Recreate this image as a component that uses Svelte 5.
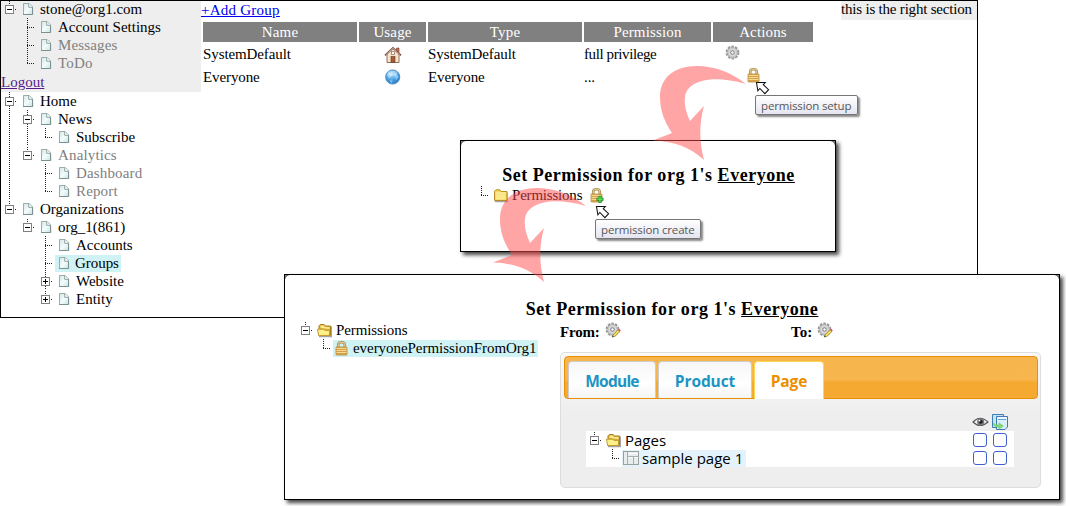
<script>
  // Tree rows: g lists the guide cells before the icon.
  // '' blank, 'v' through line, 't' branch, 'l' last branch,
  // '-' open node, '-l' open last node, '+' / '+l' closed node
  const account = [
    { g: ['-l'], text: 'stone@org1.com' },
    { g: ['', 't'], text: 'Account Settings' },
    { g: ['', 't'], text: 'Messages', dim: true },
    { g: ['', 'l'], text: 'ToDo', dim: true }
  ];
  const site = [
    { g: ['-'], text: 'Home' },
    { g: ['v', '-'], text: 'News' },
    { g: ['v', 'v', 'l'], text: 'Subscribe' },
    { g: ['v', '-l'], text: 'Analytics', dim: true },
    { g: ['v', '', 't'], text: 'Dashboard', dim: true },
    { g: ['v', '', 'l'], text: 'Report', dim: true },
    { g: ['-l'], text: 'Organizations' },
    { g: ['', '-l'], text: 'org_1(861)' },
    { g: ['', '', 't'], text: 'Accounts' },
    { g: ['', '', 't'], text: 'Groups', active: true },
    { g: ['', '', '+'], text: 'Website' },
    { g: ['', '', '+l'], text: 'Entity' }
  ];
  const permissionTree = [
    { g: ['-l'], text: 'Permissions', icon: 'open' },
    { g: ['', 'l'], text: 'everyonePermissionFromOrg1', icon: 'lock', active: true }
  ];
  const pageTree = [
    { g: ['-l'], text: 'Pages', icon: 'open' },
    { g: ['', 'l'], text: 'sample page 1', icon: 'layout', active: true }
  ];
  const columns = ['Name', 'Usage', 'Type', 'Permission', 'Actions'];
</script>

{#snippet guide(kind)}
  <svg class="cell" width="18" height="18" viewBox="0 0 18 18" shape-rendering="crispEdges">
    {#if kind !== ''}
      <path d={kind === 'l' ? 'M9.5 0V10' : kind === '-l' || kind === '+l' ? 'M9.5 1V5' : 'M9.5 0V18'} stroke="#222" stroke-dasharray="1 1" />
      {#if kind === 't' || kind === 'l'}
        <path d="M9 9.5H16" stroke="#222" stroke-dasharray="1 1" />
      {/if}
      {#if kind[0] === '-' || kind[0] === '+'}
        <rect x="5.5" y="5.5" width="8" height="8" fill="#fff" stroke="#808080" />
        <path d="M7 9.5H12" stroke="#000" />
        {#if kind[0] === '+'}<path d="M9.5 7V12" stroke="#000" />{/if}
        <path d="M15 9.5H16" stroke="#222" />
      {/if}
    {/if}
  </svg>
{/snippet}

{#snippet lock()}
  <path d="M6.2 8V4.8Q6.2 2.2 9.5 2.2T12.8 4.8V8" fill="none" stroke="#a58a50" stroke-width="2.6" />
  <path d="M6.2 8V4.8Q6.2 2.2 9.5 2.2T12.8 4.8V8" fill="none" stroke="#e6cf98" stroke-width="1.1" />
  <rect x="4" y="7" width="11" height="8" rx="0.8" fill="#e0ab50" stroke="#b58838" stroke-width="0.8" />
  <path d="M4.5 8.5H14.5M4.5 10.5H14.5M4.5 12.5H14.5" stroke="#f7d994" />
  <path d="M4.5 9.5H14.5M4.5 11.5H14.5M4.5 13.5H14.5" stroke="#cf9b48" stroke-width="0.7" />
{/snippet}

{#snippet icon(kind)}
  <svg class="cell" width="18" height="18" viewBox="0 0 18 18">
    {#if kind === 'lock'}
      <g transform="translate(0 1)">{@render lock()}</g>
    {:else if kind === 'open'}
      <path d="M5 15.7H17.4V5.5" fill="none" stroke="#666" stroke-opacity="0.6" stroke-width="1.3" />
      <path d="M5 14V4.8L6.3 3.5H10.2L11.5 5H16.5V14.5H5Z" fill="#d9b23a" stroke="#a97e1c" />
      <path d="M6.5 7V5L7.2 4.5H10L11 6H15.5V8" fill="#fbe98a" />
      <path d="M3.4 8.2H9.8L10.9 9.4H15.7L15.3 14.5H4.7Z" fill="#fdf08a" stroke="#c39a2b" />
    {:else if kind === 'folder'}
      <path d="M5 15.7H18V6.5" fill="none" stroke="#666" stroke-opacity="0.6" stroke-width="1.3" />
      <path d="M4.5 14.5V5.2L5.9 3.8H9.8L11.2 5.5H17V14.5Z" fill="#f4d65c" stroke="#b98e25" />
      <path d="M5.5 7H16" stroke="#fff9c4" /><path d="M6 8.3H15.5V13.5H6Z" fill="#fce98a" />
    {:else if kind === 'layout'}
      <rect x="2.5" y="2.5" width="15" height="13" fill="#e9ecec" stroke="#989f9f" />
      <path d="M6.5 3V15.5M7 7.5H17.5M12.5 8V15.5" stroke="#a6adad" />
      <path d="M7.5 4.5H17M7.5 8.5H12M13.5 8.5H17" stroke="#fff" />
    {:else}
      <path d="M5 3H11.5L15.5 7V15H5Z" fill="url(#paper)" />
      <path d="M5.5 15V3.5H11" fill="none" stroke="#9aadad" />
      <path d="M11 3.5L14.5 7V14.5H5" fill="none" stroke="#7b9090" />
      <path d="M10.7 3.5V7.3H14.5" fill="#fff" stroke="#8da1a1" />
    {/if}
  </svg>
{/snippet}

{#snippet tree(rows)}
  {#each rows as r}
    <div class="row" class:dim={r.dim}>
      {#each r.g as k}{@render guide(k)}{/each}
      <span class="node" class:active={r.active}>{@render icon(r.icon)}<span class="label">{r.text}</span></span>
    </div>
  {/each}
{/snippet}

{#snippet gear(pencil)}
  <svg class="gear" width="16" height="16" viewBox="0 0 16 16">
    <circle cx="7.5" cy="7.5" r="5.8" fill="none" stroke="#999" stroke-width="2.2" stroke-dasharray="2.5 1.144" />
    <circle cx="7.5" cy="7.5" r="5.2" fill="#c8c8c8" stroke="#a2a2a2" stroke-width="0.6" />
    <circle cx="7.5" cy="7.5" r="3.3" fill="none" stroke="#dedede" stroke-width="1" />
    <circle cx="7.5" cy="7.5" r="1.7" fill="#fff" stroke="#777" stroke-width="0.9" />
    {#if pencil}
      <path d="M7.5 15L8.3 12.6L13 7.8L15 9.5L10 14.3Z" fill="#f1df58" stroke="#8d7b31" stroke-width="0.7" />
      <path d="M13 7.8L14 6.8L15.8 8.6L15 9.5Z" fill="#e3474f" />
      <path d="M7.2 15.3L7.8 13.8L8.8 14.8Z" fill="#222" />
    {/if}
  </svg>
{/snippet}

{#snippet cursor()}
  <svg class="cursor" width="16" height="15" viewBox="0 0 16 15">
    <path d="M1 1.5H10.5L8.3 4L14 9.3L10 13.6L4.6 8L2.5 10.5Z" fill="#fff" stroke="#111" stroke-width="1.1" />
  </svg>
{/snippet}

{#snippet arrow()}
  <svg class="arrow" width="96" height="98" viewBox="652 64 96 98">
    <path d="M746 84C731 72 714 66 697 66C675 66 660 77 660 97C660 110 664 121 672 133L653 140.5C673 141 690 147 704 160C699 141 699 124 704 106L690 121C686 112 684 105 685 97C687 81 711 74 746 84Z" fill="#ff4b4b" fill-opacity="0.5" />
  </svg>
{/snippet}

<svg width="0" height="0" class="defs">
  <defs>
    <linearGradient id="paper" x1="0" y1="0" x2="1" y2="1">
      <stop offset="0" stop-color="#cfe4e4" /><stop offset="0.5" stop-color="#f4fcfc" /><stop offset="1" stop-color="#c3dede" />
    </linearGradient>
    <radialGradient id="water" cx="0.4" cy="0.3" r="0.75">
      <stop offset="0" stop-color="#a9dcff" /><stop offset="0.6" stop-color="#459be0" /><stop offset="1" stop-color="#2a78c0" />
    </radialGradient>
  </defs>
</svg>

<div class="desktop">
  <div class="window main">
    <aside>
      <div class="account">
        {@render tree(account)}
        <a class="logout" href="#logout">Logout</a>
      </div>
      {@render tree(site)}
    </aside>
    <section>
      <a class="add" href="#add">+Add Group</a>
      <div class="table">
        {#each columns as c}<div class="th">{c}</div>{/each}
        <div>SystemDefault</div>
        <div class="mid">
          <svg width="18" height="18" viewBox="0 0 18 18">
            <path d="M12.5 2H15V7H12.5Z" fill="#b66a50" stroke="#7c3f30" stroke-width="0.6" />
            <path d="M3 8L9 2.5L15 8V16.5H3Z" fill="#f8e4cb" stroke="#80644e" stroke-width="0.9" />
            <path d="M1 9.3L9 1.8L17 9.3" fill="none" stroke="#7a5348" stroke-width="1.7" />
            <path d="M2 8.7L9 2.2L16 8.7" fill="none" stroke="#e6baa6" stroke-width="0.7" />
            <rect x="7" y="10.5" width="4" height="6" fill="#a85c36" stroke="#6c3722" stroke-width="0.6" />
            <rect x="7.6" y="5.7" width="2.8" height="2.8" fill="#fff" stroke="#806858" stroke-width="0.7" />
          </svg>
        </div>
        <div>SystemDefault</div>
        <div class="tight">full privilege</div>
        <div class="act one">{@render gear(false)}</div>
        <div>Everyone</div>
        <div class="mid">
          <svg width="18" height="18" viewBox="0 0 18 18">
            <circle cx="8.7" cy="8" r="7.1" fill="url(#water)" stroke="#3e83bd" stroke-width="0.8" />
            <path d="M3 6Q5 3 9 4Q8 6 7 8L5 9Q4 8 3 6ZM10 4L13 5L14.5 8L12.5 11L10.5 8ZM6 11L8.5 11.5L8 14.3L6.5 13Z" fill="#c3ebff" fill-opacity="0.5" />
            <ellipse cx="8.5" cy="4.3" rx="5" ry="2.6" fill="#fff" fill-opacity="0.35" />
          </svg>
        </div>
        <div>Everyone</div>
        <div>...</div>
        <div class="act two"><svg width="18" height="18" viewBox="0 0 18 18">{@render lock()}</svg></div>
      </div>
    </section>
    <div class="right">this is the right section</div>
  </div>

  <div class="window dialog first">
    <i class="corner"></i><i class="corner r"></i>
    <h2>Set Permission for org 1's <u>Everyone</u></h2>
    <div class="row">
      {@render guide('l')}
      {@render icon('folder')}<span class="label">Permissions</span>
      <svg class="create" width="18" height="18" viewBox="0 0 18 18">
        {@render lock()}
        <path d="M13 8.8V15.8M9.5 12.3H16.5" stroke="#148a25" stroke-width="3" />
        <path d="M13 9.6V15M10.3 12.3H15.7" stroke="#59dc55" stroke-width="1.5" />
      </svg>
    </div>
  </div>

  <div class="window dialog second">
    <i class="corner"></i><i class="corner r"></i>
    <h2>Set Permission for org 1's <u>Everyone</u></h2>
    <div class="body">
      <div class="perm">{@render tree(permissionTree)}</div>
      <div class="detail">
        <div class="range">
          <div class="from"><b>From:</b>{@render gear(true)}</div>
          <div class="to"><b>To:</b>{@render gear(true)}</div>
        </div>
        <div class="tabs">
          <div class="bar">
            <div class="tab m">Module</div>
            <div class="tab p">Product</div>
            <div class="tab on">Page</div>
          </div>
          <div class="heads">
            <svg width="17" height="16" viewBox="0 0 17 16">
              <path d="M1 8Q8 0.5 16 8Q8 15 1 8Z" fill="#f3f3f3" stroke="#555" stroke-width="1.1" />
              <circle cx="8.7" cy="7.8" r="3.6" fill="#777" /><circle cx="8.7" cy="7.8" r="2" fill="#211b2b" /><circle cx="7.5" cy="6.7" r="0.9" fill="#fff" />
            </svg>
            <svg width="17" height="17" viewBox="0 0 17 17">
              <path d="M0.5 0.5H11.5V13.5H0.5Z" fill="#c5e2f6" stroke="#3d7eaf" />
              <path d="M4.5 2.5H15.5V13L13 15.5H4.5Z" fill="#d9effd" stroke="#4178b6" />
              <path d="M5.5 4H14.5" stroke="#fff" /><path d="M6 5.5H14" stroke="#65a5d4" />
              <path d="M1 9Q3 11.5 7 10.8V8.8L11.5 12L7 15.3V13.4Q2 13.5 1 9Z" fill="#81d875" stroke="#6cc860" stroke-width="0.5" />
            </svg>
          </div>
          <div class="pages">
            <div class="ptree">{@render tree(pageTree)}</div>
            <div class="checks"><i></i><i></i><i></i><i></i></div>
          </div>
        </div>
      </div>
    </div>
  </div>

  <div class="pointer a">{@render cursor()}<div class="tip">permission setup</div></div>
  <div class="pointer b">{@render cursor()}<div class="tip create-tip">permission create</div></div>
  <div class="flow a">{@render arrow()}</div>
  <div class="flow b">{@render arrow()}</div>
</div>

<style>
  :global(body) { background: #fff; }
  .desktop {
    position: relative; width: 1066px; height: 506px; overflow: hidden;
    font: 15px/18px "Liberation Serif", "Times New Roman", serif; color: #000;
  }
  .defs { position: absolute; }
  svg { display: block; flex: none; }
  .window { position: absolute; box-sizing: border-box; background: #fff; }
  .main { left: 0; top: 0; width: 978px; height: 318px; display: flex; align-items: flex-start; }
  .main::after { content: ''; position: absolute; inset: 0; border: 1px solid #000; }
  aside { width: 201px; }
  .account { height: 92px; background: #eee; }
  .logout { display: block; padding: 1px 0 0 1px; color: #551a8b; }
  .row { display: flex; height: 18px; white-space: nowrap; }
  .dim { color: #808080; letter-spacing: 0.15px; }
  .node { display: flex; height: 18px; }
  .label { padding-left: 4px; }
  .active { margin-left: 1px; padding-right: 2px; height: 17px; margin-top: 1px; background: #cff3f4; letter-spacing: -0.05px; }
  .active :global(svg) { margin: -1px 0 0 -1px; }
  .active .label { line-height: 16px; padding-left: 3px; }
  section { width: 640px; }
  .add { display: block; height: 22px; line-height: 20px; color: #00e; letter-spacing: 0.25px; }
  .table { display: grid; grid-template-columns: 154px 67px 154px 127px 100px; grid-template-rows: 20px 21px 21px; gap: 2px; margin-left: 2px; line-height: 21px; letter-spacing: -0.1px; }
  .th { background: #808080; color: #fff; text-align: center; line-height: 20px; letter-spacing: 0.15px; }
  .tight { letter-spacing: -0.4px; }
  .mid { display: flex; justify-content: center; align-items: center; }
  .act { display: flex; align-items: flex-start; }
  .one { padding: 1px 0 0 12px; }
  .two { padding-left: 31px; }
  .right { width: 137px; height: 20px; background: #eee; line-height: 19px; white-space: nowrap; letter-spacing: -0.2px; }

  .dialog { border: 1px solid #000; box-shadow: 3px 3px 4px 0 #000b; }
  .corner { position: absolute; left: 0; top: 0; width: 5px; height: 5px; background: radial-gradient(circle at 100% 100%, #fff 4.5px, #777 5px); }
  .corner.r { left: auto; right: 0; transform: scaleX(-1); }
  h2 { margin: 0; font-size: 18px; line-height: 22px; text-align: center; white-space: nowrap; letter-spacing: 0.53px; }
  .first { left: 460px; top: 140px; width: 376px; height: 112px; padding: 23px 0 0 11px; }
  .first h2 { margin-left: -10px; }
  .first .label { letter-spacing: -0.2px; }
  .create { margin-left: 5px; margin-top: 1px; }
  .second { left: 284px; top: 274px; width: 776px; height: 226px; padding-top: 23px; }
  .body { display: flex; padding-left: 11px; }
  .perm { width: 264px; padding-top: 1px; letter-spacing: -0.1px; }
  .range { display: flex; padding-top: 3px; height: 29px; }
  .from { display: flex; width: 231px; letter-spacing: -0.2px; }
  .to { display: flex; }
  .range .gear { margin: -1px 0 0 5px; }
  .tabs { box-sizing: border-box; width: 481px; height: 136px; border: 1px solid #ddd; border-radius: 5px; background: linear-gradient(#f9f9f9, #eee 45%); padding: 3px; }
  .bar {
    box-sizing: border-box; width: 474px; height: 43px; border: 1px solid #e78f08; border-radius: 4px;
    background: linear-gradient(#f7b54c, #f8b650 54%, #f6a930 62%, #f6a931); display: flex; gap: 2px; padding: 4px 0 0 3px;
    font: bold 15.5px/38px "Open Sans", sans-serif; letter-spacing: -0.1px;
  }
  .tab { box-sizing: border-box; height: 37px; border: 1px solid #ccc; border-bottom: 0; border-radius: 4px 4px 0 0; background: linear-gradient(#f6f6f6, #fff 60%, #f4f4f4); color: #1c94c4; text-align: center; }
  .m { width: 88px; letter-spacing: -0.75px; } .p { width: 94px; }
  .on { width: 70px; height: 38px; background: #fff; border-color: #fbd850; color: #eb8f00; }
  .heads { display: flex; gap: 3px; height: 17px; padding: 15px 0 0 408px; }
  .pages { display: flex; justify-content: space-between; width: 428px; height: 36px; margin-left: 22px; background: #fff; font: 15px/18px "Open Sans", sans-serif; }
  .ptree { margin-left: -1px; }
  .ptree .active { background: #e4f3fb; letter-spacing: 0; padding-right: 3px; }
  .checks { display: grid; grid-template-columns: 14px 14px; grid-template-rows: 14px 14px; gap: 4px 6px; padding: 2px 7px 0 0; }
  .checks i { box-sizing: border-box; height: 14px; border: 1px solid #3f5fd0; border-radius: 3px; background: #fff; }

  .pointer, .flow { position: absolute; }
  .pointer.a { left: 755px; top: 81px; }
  .pointer.b { left: 595px; top: 205px; }
  .cursor { height: 14px; }
  .tip {
    box-sizing: border-box; width: 103px; height: 20px; padding: 0 5px; border: 1px solid #767676; border-radius: 2px;
    background: linear-gradient(#fff, #e5e5f1); color: #575757; font: 11.5px/19px "Open Sans", sans-serif;
    white-space: nowrap; box-shadow: 2px 2px 2px #0007; letter-spacing: -0.15px;
  }
  .create-tip { width: 106px; }
  .flow.a { left: 652px; top: 64px; }
  .flow.b { left: 492px; top: 186px; }
</style>
